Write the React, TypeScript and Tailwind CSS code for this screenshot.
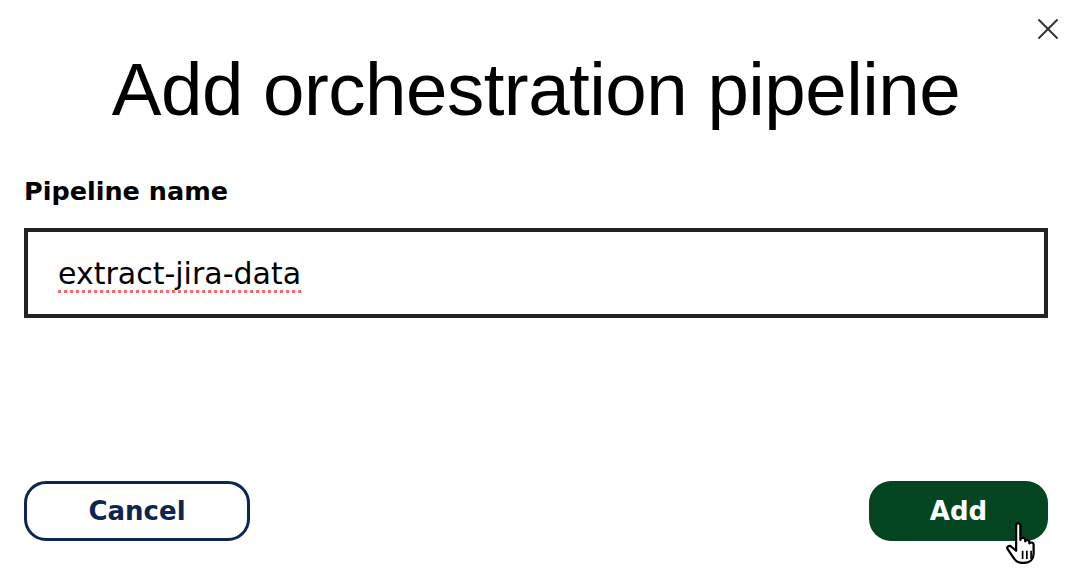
import { X } from "lucide-react";

function HandCursor() {
  return (
    <svg width="48" height="46" viewBox="0 0 17 17" preserveAspectRatio="none" className="pointer-events-none absolute left-[1002px] top-[521px]">
      <path
        d="M5 1.5c0-.8 1.5-.8 1.5 0V7l.2-.4c.4-.6 1.5-.5 1.5.3v.6c.3-.6 1.5-.5 1.5.3v.5c.4-.6 1.5-.4 1.5.4V12c0 2-1.2 3.5-3.5 3.5H7c-1.2 0-2-.6-2.7-1.6L2 10.4c-.5-.8.6-1.6 1.3-.9L5 11V1.5z"
        fill="#fff"
        stroke="#000"
        strokeWidth="0.8"
        strokeLinejoin="round"
      />
      <path d="M7.3 11v3M8.8 11v3M10.3 11v3" stroke="#000" strokeWidth="0.6" />
    </svg>
  );
}

export default function App() {
  return (
    <div className="relative flex h-[582px] w-full flex-col bg-white pl-6 pr-[34px] font-['Liberation_Sans',Arial,sans-serif]">
      <button type="button" className="absolute right-[16px] top-[11px] text-[#333]">
        <X size={36} strokeWidth={1.3} />
      </button>

      <h1 className="mt-[46px] text-center text-[74.5px] leading-[88px] tracking-[-0.5px] text-black">
        Add orchestration pipeline
      </h1>

      <label className="mt-[42px] font-['DejaVu_Sans',sans-serif] text-[25.5px] font-bold leading-[30px] text-black">
        Pipeline name
      </label>

      <div className="mt-[22px] flex h-[90px] items-center border-4 border-[#222] px-[30px] pt-[2px]">
        <span className="font-['DejaVu_Sans',sans-serif] text-[30px] leading-[36px] text-black underline decoration-[#f26b6b] decoration-dotted decoration-[3px] underline-offset-[6px] [text-decoration-skip-ink:none]">
          extract-jira-data
        </span>
      </div>

      <div className="mt-auto mb-[41px] flex items-center justify-between font-['DejaVu_Sans',sans-serif]">
        <button
          type="button"
          className="flex h-[60px] w-[226px] items-center justify-center rounded-[22px] border-[3px] border-[#0d2552] text-[26px] font-bold text-[#0d2552]"
        >
          Cancel
        </button>
        <button
          type="button"
          className="flex h-[60px] w-[179px] items-center justify-center rounded-[22px] bg-[#024520] text-[26px] font-bold text-white"
        >
          Add
        </button>
      </div>

      <HandCursor />
    </div>
  );
}
